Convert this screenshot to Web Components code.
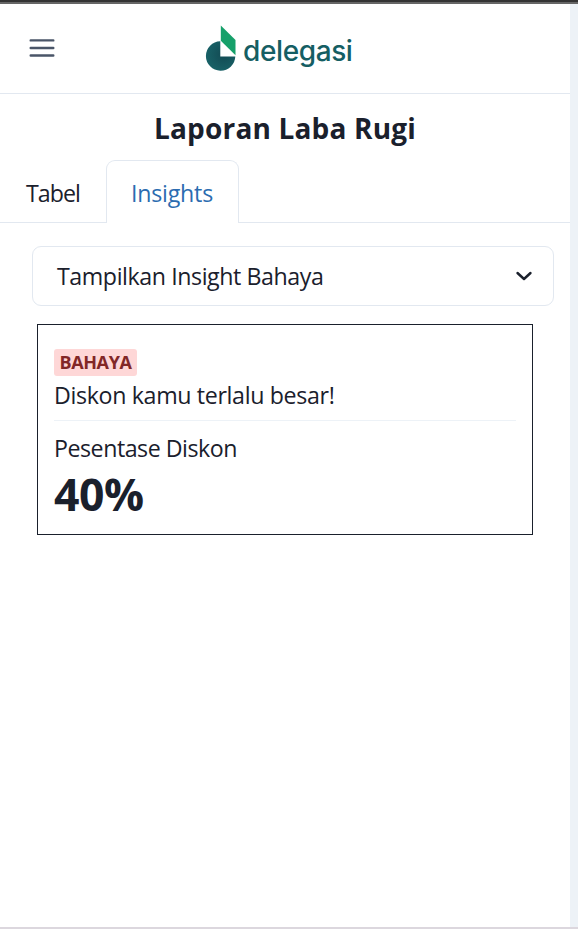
<!DOCTYPE html>
<html lang="id">
<head>
<meta charset="utf-8">
<title>Laporan Laba Rugi</title>
<style>
html, body { margin: 0; height: 100%; }
body { font-family: "Open Sans", "Noto Sans", sans-serif; font-weight: 400; color: #1a202c; background: #fff; overflow: hidden; }
</style>
</head>
<body>
<report-page>
  <app-header slot="header"></app-header>
  <page-title><fit-text width="262">Laporan Laba Rugi</fit-text></page-title>
  <tab-bar>
    <tab-item><fit-text width="54">Tabel</fit-text></tab-item>
    <tab-item active><fit-text width="82">Insights</fit-text></tab-item>
  </tab-bar>
  <select-box><fit-text width="266.5">Tampilkan Insight Bahaya</fit-text></select-box>
  <insight-card>
    <status-badge slot="badge"><fit-text width="72">BAHAYA</fit-text></status-badge>
    <fit-text slot="message" width="280.5">Diskon kamu terlalu besar!</fit-text>
    <fit-text slot="label" width="183">Pesentase Diskon</fit-text>
    <fit-text slot="value" width="89.5">40%</fit-text>
  </insight-card>
</report-page>
<script>
function define(name, html, connected) {
  customElements.define(name, class extends HTMLElement {
    constructor() {
      super();
      this.attachShadow({ mode: 'open' }).innerHTML = html;
    }
    connectedCallback() { if (connected) connected(this); }
  });
}

define('report-page', `
<style>
:host { display: flex; flex-direction: column; box-sizing: border-box; height: 100vh; border-top: 2px solid #333; border-bottom: 2px solid #dcd7de; }
.strip { flex: none; height: 2px; background: #666; }
.body { flex: 1; display: flex; min-height: 0; }
main { flex: 1; min-width: 0; background: #fff; }
aside { width: 8px; background: #edf2f7; }
</style>
<div class="strip"></div>
<div class="body"><main><slot name="header"></slot><slot></slot></main><aside></aside></div>`);

define('app-header', `
<style>
:host { display: flex; align-items: center; box-sizing: border-box; height: 90px; padding: 0 0 1px 29px; border-bottom: 1px solid #e2e8f0; }
svg { display: block; }
brand-logo { margin-left: 150px; }
</style>
<svg width="26" height="20" viewBox="0 0 26 20" fill="none" stroke="#4a5568" stroke-width="2.4" stroke-linecap="round"><path d="M1.7 2.4h22.6M1.7 10h22.6M1.7 17.5h22.6"/></svg>
<brand-logo></brand-logo>`);

define('brand-logo', `
<style>
:host { display: flex; align-items: flex-start; height: 46px; color: #155e63; }
svg { display: block; flex: none; }
fit-text { margin: 9px 0 0 7px; font: 500 28px/34px Inter, "Open Sans", sans-serif; }
</style>
<svg width="31" height="46" viewBox="0 0 31 46">
<defs><radialGradient id="g" cx=".6" cy=".45" r=".7"><stop offset="0" stop-color="#124a53"/><stop offset="1" stop-color="#19656a"/></radialGradient></defs>
<g transform="translate(.3 .5)"><path fill="url(#g)" d="M15 15.8A14.7 14.7 0 1 0 30 31H15Z"/>
<path fill="#16a06a" d="M15.5 0 30.2 14.5V29.8L15.5 15.3Z"/></g>
</svg>
<fit-text width="109.5">delegasi</fit-text>`);

define('page-title', `
<style>:host { display: flex; justify-content: center; height: 66px; font-size: 28px; line-height: 68px; font-weight: 700; }</style><slot></slot>`);

define('tab-bar', `
<style>:host { display: flex; box-sizing: border-box; height: 63px; border-bottom: 1px solid #e2e8f0; }</style><slot></slot>`);

define('tab-item', `
<style>
:host { display: block; box-sizing: border-box; height: 63px; padding: 0 25px; border: 1px solid transparent; border-bottom: 0; font-size: 23.2px; line-height: 65px; }
:host([active]) { width: 133px; padding: 0 24px; color: #2b6cb0; background: #fff; border-color: #e2e8f0; border-radius: 9px 9px 0 0; }
:host(:not([active])) { width: 106px; }
</style><slot></slot>`);

define('select-box', `
<style>
:host { display: flex; align-items: center; justify-content: space-between; box-sizing: border-box; height: 60px; margin: 23px 16px 0 32px; padding: 0 20px 0 24px; border: 1px solid #e2e8f0; border-radius: 9px; font-size: 23.2px; line-height: 37px; }
svg { display: block; }
</style><slot></slot>
<svg width="18" height="12" viewBox="0 0 18 12" fill="none" stroke="#1a202c" stroke-width="2.4" stroke-linecap="round" stroke-linejoin="round"><path d="m2.5 3 6.5 6 6.5-6"/></svg>`);

define('insight-card', `
<style>
:host { display: block; box-sizing: border-box; height: 211px; margin: 18px 37px 0; padding: 24px 16px 0; border: 1px solid #1a202c; }
.message { height: 44px; line-height: 39px; font-size: 23.2px; border-bottom: 1px solid #edf2f7; }
.label { height: 45px; padding-top: 7px; box-sizing: border-box; line-height: 41px; font-size: 23.2px; }
.value { font-size: 44.5px; line-height: 56px; font-weight: 700; }
</style>
<slot name="badge"></slot>
<div class="message"><slot name="message"></slot></div>
<div class="label"><slot name="label"></slot></div>
<div class="value"><slot name="value"></slot></div>`);

define('status-badge', `
<style>:host { display: flex; justify-content: center; width: 83px; height: 27px; border-radius: 3px; background: #fed7d7; color: #822727; font-size: 18px; line-height: 27px; font-weight: 700; }</style><slot></slot>`);

/* Single-line text whose tracking fills the width given in pixels. */
define('fit-text', `
<style>:host { display: block; white-space: nowrap; } span { display: inline-block; }</style><span><slot></slot></span>`, el => {
  const span = el.shadowRoot.querySelector('span');
  const target = Number(el.getAttribute('width'));
  const count = el.textContent.trim().length;
  span.style.letterSpacing = (target - span.getBoundingClientRect().width) / count + 'px';
});
</script>
</body>
</html>
